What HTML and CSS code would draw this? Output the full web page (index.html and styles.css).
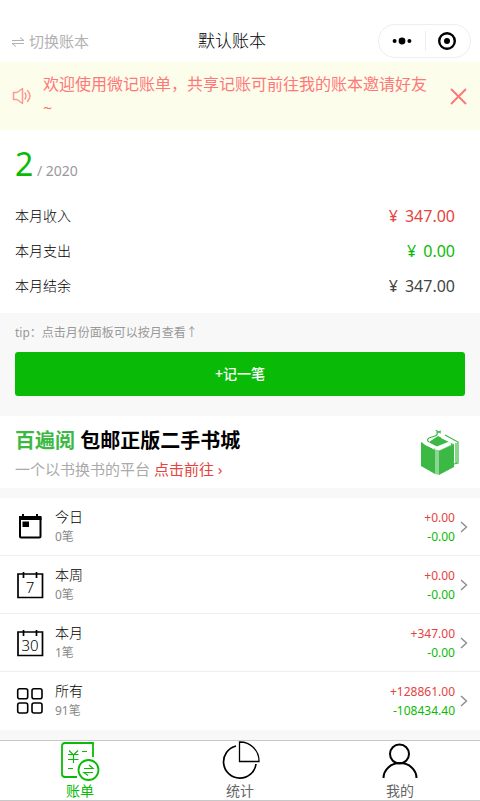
FILE: index.html
```html
<!DOCTYPE html>
<html lang="zh-CN">
<head>
<meta charset="utf-8">
<meta name="viewport" content="width=device-width, initial-scale=1">
<title>默认账本</title>
<link rel="stylesheet" href="styles.css">
</head>
<body>
<header class="navbar">
  <button class="switch" type="button">
    <svg width="14" height="12" viewBox="0 0 14 12" fill="none" stroke="currentColor"><path d="M1 5.500H13L9 2.500M13 8.500H1L5 11.500"/></svg>
    <span>切换账本</span>
  </button>
  <h1 class="title">默认账本</h1>
  <div class="capsule">
    <button type="button" aria-label="更多">
      <svg width="20" height="8" viewBox="0 0 20 8"><circle cx="2.600" cy="4" r="2"/><circle cx="10" cy="4" r="3.400"/><circle cx="17.400" cy="4" r="2"/></svg>
    </button>
    <button type="button" aria-label="关闭小程序">
      <svg width="20" height="20" viewBox="0 0 20 20"><circle cx="10" cy="10" r="7.800" fill="none" stroke="#000" stroke-width="2.400"/><circle cx="10" cy="10" r="3"/></svg>
    </button>
  </div>
</header>

<section class="notice">
  <svg width="20" height="18" viewBox="0 0 20 18" fill="none" stroke="currentColor" stroke-width="1.500" stroke-linejoin="round" stroke-linecap="round" opacity=".75"><path d="M1.500 5.500H5L10.500 1.500V16.500L5 12.500H1.500Z"/><path d="M13 6Q15 9 13 12M15.500 3.500Q20.500 9 15.500 14.500"/></svg>
  <p>欢迎使用微记账单，共享记账可前往我的账本邀请好友~</p>
  <button type="button" aria-label="关闭">
    <svg width="17" height="17" viewBox="0 0 17 17" stroke="currentColor" stroke-width="2"><path d="M1 1L16 16M16 1L1 16"/></svg>
  </button>
</section>

<main>
  <section class="summary">
    <h2 class="month"><b>2</b> / 2020</h2>
    <dl>
      <div class="line"><dt>本月收入</dt><dd class="income"><span>¥</span>347.00</dd></div>
      <div class="line"><dt>本月支出</dt><dd class="expense"><span>¥</span>0.00</dd></div>
      <div class="line"><dt>本月结余</dt><dd><span>¥</span>347.00</dd></div>
    </dl>
  </section>

  <section class="actions">
    <p class="tip">tip：点击月份面板可以按月查看↑</p>
    <button class="add" type="button">+记一笔</button>
  </section>

  <a class="promo" href="#books">
    <span class="promo-text">
      <strong><em>百遍阅</em> 包邮正版二手书城</strong>
      <span class="promo-sub">一个以书换书的平台 <span class="income">点击前往 ›</span></span>
    </span>
    <svg width="40" height="48" viewBox="0 0 40 48"><path fill="#3cb944" d="M1 12L15 20V44L1 36ZM19 21L34 14V37L19 45Z"/><path fill="#8bd690" d="M15 20L19 21V45L15 44Z"/><path fill="#3cb944" d="M9 12L18 6L34 14L19 21L15 20Z"/><path fill="#fff" d="M3 13Q4 11 8 12L17 16.500Q17 19 13 18.500L5 15ZM15 19.500Q15 17 18 16L28 12Q32 13 31 15L19 20.500ZM21 8Q23 5 26 7L36 12Q35 15 31 13Z"/><path fill="none" stroke="#3cb944" stroke-width="1.200" d="M9 12Q6 10 9 8L15 6Q18 5 17 2M16 0L18 2L21 1M18 2L21 3M25 5L38 12V33L34 34M36 13V33"/></svg>
  </a>

  <nav class="list" aria-label="账单">
    <a class="row" href="#day">
      <svg width="30" height="30" viewBox="0 0 30 30"><rect x="5" y="5" width="20.500" height="20.500" rx="1" fill="none" stroke="#000" stroke-width="2"/><path d="M4 4H26.500V8H4ZM7 2H9V5H7ZM21 2H23V5H21ZM7.500 9.500H14V15H7.500Z"/></svg>
      <span class="label"><span>今日</span><small>0笔</small></span>
      <span class="amount"><span class="income">+0.00</span><span class="expense">-0.00</span></span>
      <svg class="arrow" width="8" height="12" viewBox="0 0 8 12"><path d="M1 1L6.500 6L1 11"/></svg>
    </a>
    <a class="row" href="#week">
      <svg width="30" height="30" viewBox="0 0 30 30"><path fill="none" stroke="#000" stroke-width="1.700" d="M3 4H27.500V27.500H3ZM8.500 2V8M21.500 2V8"/><text x="15" y="23" text-anchor="middle">7</text></svg>
      <span class="label"><span>本周</span><small>0笔</small></span>
      <span class="amount"><span class="income">+0.00</span><span class="expense">-0.00</span></span>
      <svg class="arrow" width="8" height="12" viewBox="0 0 8 12"><path d="M1 1L6.500 6L1 11"/></svg>
    </a>
    <a class="row" href="#month">
      <svg width="30" height="30" viewBox="0 0 30 30"><path fill="none" stroke="#000" stroke-width="1.700" d="M3 4H27.500V27.500H3ZM8.500 2V8M21.500 2V8"/><text x="15" y="23" text-anchor="middle">30</text></svg>
      <span class="label"><span>本月</span><small>1笔</small></span>
      <span class="amount"><span class="income">+347.00</span><span class="expense">-0.00</span></span>
      <svg class="arrow" width="8" height="12" viewBox="0 0 8 12"><path d="M1 1L6.500 6L1 11"/></svg>
    </a>
    <a class="row" href="#all">
      <svg width="30" height="30" viewBox="0 0 30 30" fill="none" stroke="#000" stroke-width="1.600"><rect x="2.700" y="2.700" width="10" height="10" rx="2"/><rect x="17" y="2.700" width="10" height="10" rx="2"/><rect x="2.700" y="17" width="10" height="10" rx="2"/><rect x="17" y="17" width="10" height="10" rx="2"/></svg>
      <span class="label"><span>所有</span><small>91笔</small></span>
      <span class="amount"><span class="income">+128861.00</span><span class="expense">-108434.40</span></span>
      <svg class="arrow" width="8" height="12" viewBox="0 0 8 12"><path d="M1 1L6.500 6L1 11"/></svg>
    </a>
  </nav>
</main>

<nav class="tabbar" aria-label="主导航">
  <a class="active" href="#bills">
    <svg width="40" height="40" viewBox="0 0 40 40" fill="none" stroke="currentColor" stroke-width="1.800"><path d="M33 16V2H5Q2 2 2 5V33Q2 36 5 36H17"/><circle cx="28.500" cy="29" r="10"/><path stroke-width="1.200" d="M9 9.500L13.500 14L18 9.500M8 13.500H18.500M8 18.500H18.500M13.500 13V22M22 10.500H27M8 27.500H13M24 27.500H33L29 24M33 31.500H24L28 34.500"/></svg>
    <span>账单</span>
  </a>
  <a href="#stats">
    <svg width="40" height="40" viewBox="0 0 40 40" fill="none" stroke="#000" stroke-width="1.700"><path d="M16 5A16.300 16.300 0 1 0 36 23"/><path stroke-width="1.300" d="M19.500 1V20.500H39A19 19 0 0 0 19.500 1Z"/></svg>
    <span>统计</span>
  </a>
  <a href="#me">
    <svg width="40" height="40" viewBox="0 0 40 40" fill="none" stroke="#000" stroke-width="2"><circle cx="19.500" cy="13" r="9.500"/><path d="M3.500 37A16.500 15 0 0 1 36.500 37"/></svg>
    <span>我的</span>
  </a>
</nav>
</body>
</html>
```
FILE: styles.css
```css
* { box-sizing: border-box; }

body {
  display: flex;
  flex-direction: column;
  min-height: 100vh;
  margin: 0;
  background: #f8f8f8;
  color: #444;
  font: 14px/20px "Noto Sans", "Noto Sans CJK SC", sans-serif;
}

h1, h2, p, dl, dd { margin: 0; font-weight: 400; }
button { padding: 0; border: 0; background: none; color: inherit; font: inherit; cursor: pointer; }
a { color: inherit; text-decoration: none; }
svg { display: block; flex: none; }

.income { color: #e64340; }
.expense { color: #09bb07; }

.navbar {
  display: flex;
  align-items: center;
  height: 62px;
  padding: 20px 9px 0 11px;
  background: #fff;
}
.switch {
  display: flex;
  align-items: center;
  gap: 4px;
  color: #b2b2b2;
  font-size: 15px;
}
.title {
  flex: 1;
  padding-right: 3px;
  color: #000;
  font-size: 17px;
  font-weight: 300;
  line-height: 24px;
  text-align: center;
}
.capsule {
  display: flex;
  width: 93px;
  height: 34px;
  border: 1px solid #eee;
  border-radius: 17px;
}
.capsule button { display: flex; flex: 1; align-items: center; justify-content: center; }
.capsule button + button { background: linear-gradient(#eee, #eee) left center / 1px 20px no-repeat; }

.notice {
  display: flex;
  align-items: center;
  gap: 11px;
  padding: 10px 13px 10px 12px;
  background: #fdfdec;
  color: #ff7878;
  font-size: 16px;
  line-height: 24px;
}
.notice p { flex: 1; padding-right: 10px; }

.summary { padding: 14px 25px 10px 15px; background: #fff; }
.month { height: 54px; color: #999; font-size: 14px; line-height: 40px; }
.month b { color: #09bb07; font-size: 32px; font-weight: 400; }
.line { display: flex; align-items: center; justify-content: space-between; height: 35px; }
.line dt { color: #000; font-weight: 300; }
.line dd { font-size: 16px; }
.line span { margin-right: 7px; }

.actions { padding: 10px 15px 20px; }
.tip { margin-bottom: 9px; color: #999; font-size: 12px; }
.add {
  width: 100%;
  height: 44px;
  border-radius: 3px;
  background: #09bb07;
  color: #fff;
  font-size: 14px;
  font-weight: 500;
}

.promo {
  display: flex;
  align-items: center;
  justify-content: space-between;
  height: 72px;
  margin-bottom: 10px;
  padding: 3px 20px 0 15px;
  background: #fff;
}
.promo-text { display: grid; gap: 4px; }
.promo strong { color: #000; font-size: 20px; line-height: 26px; }
.promo em { color: #3cb944; font-style: normal; }
.promo-sub { color: #aaa; font-size: 15px; line-height: 22px; }

.list { background: #fff; }
.row {
  display: flex;
  align-items: center;
  height: 58px;
  padding: 0 12px 0 15px;
  border-bottom: 1px solid #eee;
}
.row:last-child { border-color: #fff; }
.row text { font-size: 15px; font-weight: 300; }
.label { display: grid; flex: 1; margin-left: 10px; color: #000; font-weight: 300; }
.label small { color: #888; font-size: 12px; font-weight: 400; }
.amount { display: grid; margin-right: 5px; font-size: 12px; line-height: 19px; text-align: right; }
.arrow { fill: none; stroke: #888; stroke-width: 1.300; }

.tabbar {
  display: flex;
  height: 61px;
  margin-top: auto;
  border: solid #c8c8c8;
  border-width: 1px 0;
  background: #fff;
  color: #666;
}
.tabbar a { display: flex; flex: 1; flex-direction: column; align-items: center; }
.tabbar .active { color: #09bb07; }
```
